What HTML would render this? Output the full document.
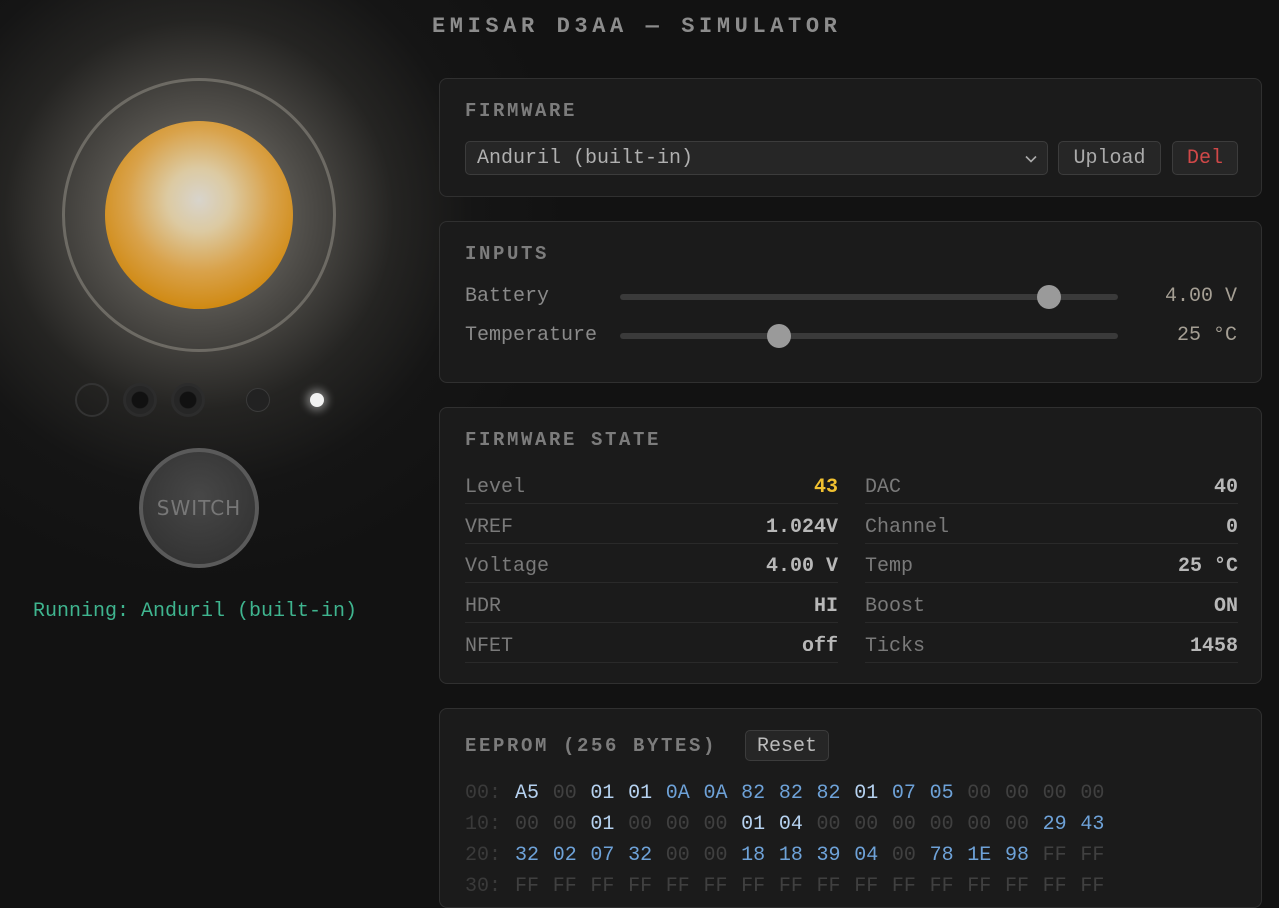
<!DOCTYPE html>
<html><head><meta charset="utf-8"><style>
*{box-sizing:border-box;margin:0;padding:0}
html,body{width:1279px;height:883px;overflow:hidden;background:#121212;font-family:"Liberation Mono",monospace;color:#999}
.glow{position:absolute;left:-231px;top:-215px;width:860px;height:860px;border-radius:50%;background:radial-gradient(circle,rgba(210,205,190,.6) 0%,rgba(160,155,145,.42) 18%,rgba(80,78,72,.3) 32%,rgba(35,35,35,.18) 45%,rgba(18,18,18,0) 62%)}
.title{position:absolute;left:432px;top:14px;font-size:22px;font-weight:bold;letter-spacing:4.6px;color:#8c8c8c}
.ring{position:absolute;left:62px;top:78px;width:274px;height:274px;border-radius:50%;border:3px solid rgba(120,118,110,.8)}
.orb{position:absolute;left:105px;top:121px;width:188px;height:188px;border-radius:50%;background:radial-gradient(circle at 50% 42%,#d8d4cc 0%,#dccaa2 22%,#d9a24a 50%,#d08a14 75%,#b87208 100%)}
.d{position:absolute;border-radius:50%}
.sw{position:absolute;left:139px;top:448px;width:120px;height:120px;border-radius:50%;border:4px solid #5a5a5a;background:radial-gradient(circle at 50% 40%,#474747,#2e2e2e);color:#777;font-family:"DejaVu Sans",sans-serif;font-size:20px;text-align:center;line-height:112px;letter-spacing:1px}
.run{position:absolute;left:33px;top:600px;font-size:20px;color:#3fb58f}
.p{position:absolute;left:439px;width:823px;background:#1b1b1b;border:1px solid #303030;border-radius:8px}
.h{position:absolute;left:25px;font-size:19px;font-weight:bold;letter-spacing:2.6px;color:#7c7c7c}
.btn{position:absolute;height:34px;border:1px solid #3c3c3c;border-radius:5px;background:#262626;font-size:20px;line-height:34px;text-align:center;color:#aaa}
.lab{position:absolute;left:25px;font-size:20px;color:#8a8a8a}
.track{position:absolute;left:180px;width:498px;height:6px;border-radius:3px;background:#3a3a3a}
.knob{position:absolute;width:24px;height:24px;border-radius:50%;background:#9a9a9a}
.val{position:absolute;right:24px;font-size:20px;color:#a59f94}
.row{position:absolute;width:373px;height:40px;border-bottom:1px solid #2a2a2a;font-size:20px;line-height:48px}
.row span{position:absolute;left:0;color:#7a7a7a}
.row b{position:absolute;right:0;color:#b8b8b8}
.hex{position:absolute;left:25px;font-size:20px;height:31px;line-height:31px;white-space:nowrap}
.hex i{font-style:normal;display:inline-block;width:37.7px}
.a{color:#3a3a3a}.z{color:#404040}.l{color:#b6d2f0}.b{color:#6ea2d8}
</style></head><body>
<div class="glow"></div>
<div class="title">EMISAR D3AA — SIMULATOR</div>
<div class="ring"></div>
<div class="orb"></div>
<div class="d" style="left:75px;top:383px;width:34px;height:34px;border:2px solid #333"></div>
<div class="d" style="left:123px;top:383px;width:34px;height:34px;border:3px solid #2c2c2c;background:radial-gradient(circle,#111 40%,#262626 45%)"></div>
<div class="d" style="left:171px;top:383px;width:34px;height:34px;border:3px solid #2c2c2c;background:radial-gradient(circle,#111 40%,#262626 45%)"></div>
<div class="d" style="left:246px;top:388px;width:24px;height:24px;border:1px solid #3a3a3a;background:#222"></div>
<div class="d" style="left:310px;top:393px;width:14px;height:14px;background:#f2f2f2;box-shadow:0 0 8px 4px rgba(255,255,255,.35)"></div>
<div class="sw">SWITCH</div>
<div class="run">Running: Anduril (built-in)</div>

<div class="p" style="top:78px;height:119px">
<div class="h" style="top:21px">FIRMWARE</div>
<div class="btn" style="left:25px;top:62px;width:583px;text-align:left;padding-left:11px;color:#b0b0b0">Anduril (built-in)<svg style="position:absolute;right:10px;top:13px" width="12" height="8" viewBox="0 0 12 8"><path d="M1 1.5L6 6.5L11 1.5" fill="none" stroke="#aaa" stroke-width="1.6"/></svg></div>
<div class="btn" style="left:618px;top:62px;width:103px">Upload</div>
<div class="btn" style="left:732px;top:62px;width:66px;color:#d04848">Del</div>
</div>

<div class="p" style="top:221px;height:162px">
<div class="h" style="top:21px">INPUTS</div>
<div class="lab" style="top:63px">Battery</div>
<div class="track" style="top:72px"></div><div class="knob" style="left:597px;top:63px"></div>
<div class="val" style="top:63px">4.00 V</div>
<div class="lab" style="top:102px">Temperature</div>
<div class="track" style="top:111px"></div><div class="knob" style="left:327px;top:102px"></div>
<div class="val" style="top:102px">25 °C</div>
</div>

<div class="p" style="top:407px;height:277px">
<div class="h" style="top:21px">FIRMWARE STATE</div>
<div class="row" style="left:25px;top:56px"><span>Level</span><b style="color:#f0c030">43</b></div>
<div class="row" style="left:425px;top:56px"><span>DAC</span><b>40</b></div>
<div class="row" style="left:25px;top:96px"><span>VREF</span><b>1.024V</b></div>
<div class="row" style="left:425px;top:96px"><span>Channel</span><b>0</b></div>
<div class="row" style="left:25px;top:135px"><span>Voltage</span><b>4.00 V</b></div>
<div class="row" style="left:425px;top:135px"><span>Temp</span><b>25 °C</b></div>
<div class="row" style="left:25px;top:175px"><span>HDR</span><b>HI</b></div>
<div class="row" style="left:425px;top:175px"><span>Boost</span><b>ON</b></div>
<div class="row" style="left:25px;top:215px"><span>NFET</span><b>off</b></div>
<div class="row" style="left:425px;top:215px"><span>Ticks</span><b>1458</b></div>
</div>

<div class="p" style="top:708px;height:200px">
<div class="h" style="top:26px">EEPROM (256 BYTES)</div>
<div class="btn" style="left:305px;top:21px;width:84px;height:31px;line-height:31px;color:#bbb">Reset</div>
<div class="hex" style="top:69px"><i class="a" style="width:50px">00:</i><i class="l">A5</i><i class="z">00</i><i class="l">01</i><i class="l">01</i><i class="b">0A</i><i class="b">0A</i><i class="b">82</i><i class="b">82</i><i class="b">82</i><i class="l">01</i><i class="b">07</i><i class="b">05</i><i class="z">00</i><i class="z">00</i><i class="z">00</i><i class="z">00</i></div>
<div class="hex" style="top:100px"><i class="a" style="width:50px">10:</i><i class="z">00</i><i class="z">00</i><i class="l">01</i><i class="z">00</i><i class="z">00</i><i class="z">00</i><i class="l">01</i><i class="l">04</i><i class="z">00</i><i class="z">00</i><i class="z">00</i><i class="z">00</i><i class="z">00</i><i class="z">00</i><i class="b">29</i><i class="b">43</i></div>
<div class="hex" style="top:131px"><i class="a" style="width:50px">20:</i><i class="b">32</i><i class="b">02</i><i class="b">07</i><i class="b">32</i><i class="z">00</i><i class="z">00</i><i class="b">18</i><i class="b">18</i><i class="b">39</i><i class="b">04</i><i class="z">00</i><i class="b">78</i><i class="b">1E</i><i class="b">98</i><i class="z">FF</i><i class="z">FF</i></div>
<div class="hex" style="top:162px"><i class="a" style="width:50px">30:</i><i class="z">FF</i><i class="z">FF</i><i class="z">FF</i><i class="z">FF</i><i class="z">FF</i><i class="z">FF</i><i class="z">FF</i><i class="z">FF</i><i class="z">FF</i><i class="z">FF</i><i class="z">FF</i><i class="z">FF</i><i class="z">FF</i><i class="z">FF</i><i class="z">FF</i><i class="z">FF</i></div>
</div>
</body></html>
